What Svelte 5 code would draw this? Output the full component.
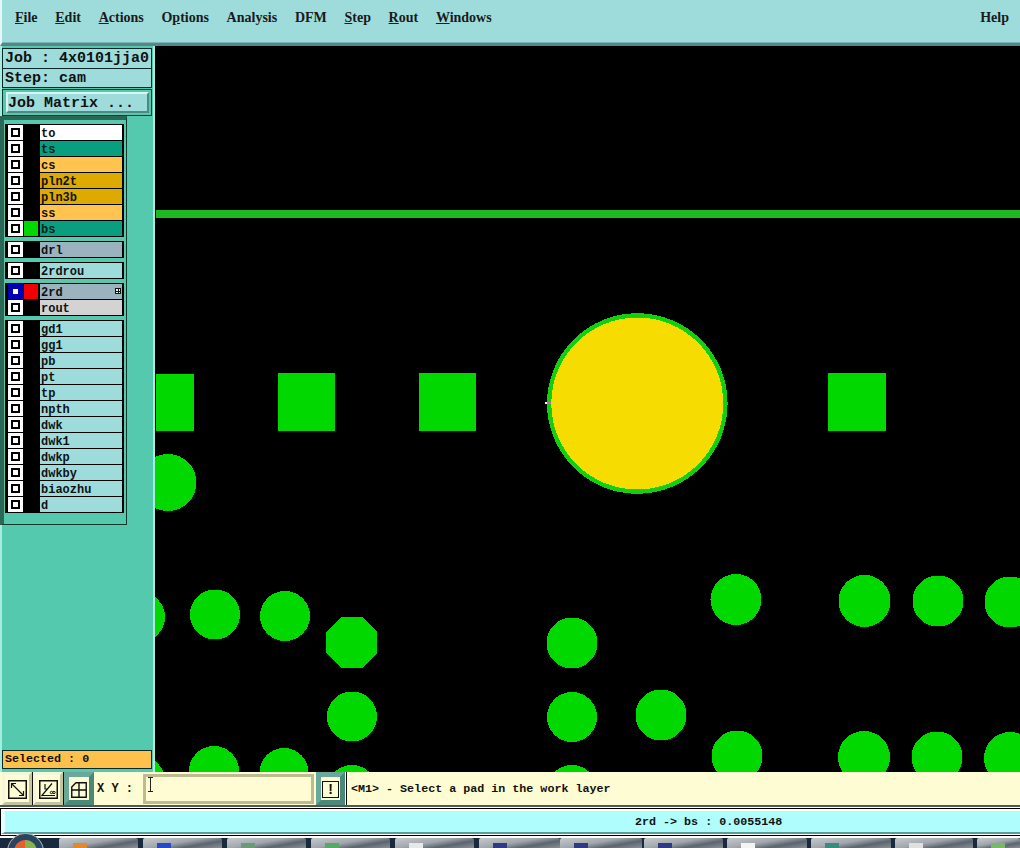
<script>
  const menus = [
    { pre: "", u: "F", post: "ile" },
    { pre: "", u: "E", post: "dit" },
    { pre: "", u: "A", post: "ctions" },
    { pre: "O", u: "p", post: "tions" },
    { pre: "Analysis", u: "", post: "" },
    { pre: "DFM", u: "", post: "" },
    { pre: "", u: "S", post: "tep" },
    { pre: "", u: "R", post: "out" },
    { pre: "", u: "W", post: "indows" }
  ];

  const groups = [
    [
      { name: "to", bg: "#ffffff" },
      { name: "ts", bg: "#0a9e80", fg: "#021f19" },
      { name: "cs", bg: "#ffc450" },
      { name: "pln2t", bg: "#dcaa00" },
      { name: "pln3b", bg: "#dcaa00" },
      { name: "ss", bg: "#ffc450" },
      { name: "bs", bg: "#0a9e80", fg: "#021f19", swatch: "#00d800" }
    ],
    [{ name: "drl", bg: "#9ab3bf" }],
    [{ name: "2rdrou", bg: "#9edcdc" }],
    [
      { name: "2rd", bg: "#9ab3bf", swatch: "#f00000", work: true },
      { name: "rout", bg: "#d3d3d3" }
    ],
    ["gd1", "gg1", "pb", "pt", "tp", "npth", "dwk", "dwk1", "dwkp", "dwkby", "biaozhu", "d"].map(
      (name) => ({ name, bg: "#9edcdc" })
    )
  ];

  const squares = [
    [156, 374, 38, 57],
    [278, 373, 57, 58],
    [419, 373, 57, 58],
    [828, 373, 58, 58]
  ];

  const pads = [
    [168, 482.5, 28.5],
    [140, 617, 25],
    [215, 614.5, 25],
    [285, 616, 25],
    [352, 716.5, 25],
    [140, 781, 25],
    [214, 771, 25],
    [284, 772.5, 24.5],
    [352, 790, 25],
    [572, 643, 25.5],
    [572, 717, 25],
    [661, 715, 25.5],
    [572, 790, 25],
    [736, 599.5, 25.5],
    [864.5, 601, 26],
    [938, 601, 25.5],
    [1010, 602, 25.5],
    [737, 756, 25.5],
    [864, 757, 26],
    [937, 757, 25.5],
    [1010, 758, 26]
  ];

  // ml is the gap to the previous taskbar button
  const tasks = [
    { w: 79, c: "#e08a30", ml: 59 },
    { w: 79, c: "#2848c8", ml: 5 },
    { w: 79, c: "#6a9a78", ml: 5 },
    { w: 79, c: "#58a868", ml: 5 },
    { w: 79, c: "#e8e8e8", ml: 5 },
    { w: 81, c: "#303a80", ml: 5 },
    { w: 82, c: "#303a80", ml: 0 },
    { w: 79, c: "#303a80", ml: 2 },
    { w: 80, c: "#f4f4f4", ml: 4 },
    { w: 80, c: "#3a8a80", ml: 4 },
    { w: 78, c: "#e0e0e0", ml: 4 },
    { w: 43, c: "#78b868", ml: 4 }
  ];
</script>

<div class="app">
  <header class="menubar">
    <nav class="menus">
      {#each menus as m}
        <span class="menu">{m.pre}<u>{m.u}</u>{m.post}</span>
      {/each}
    </nav>
    <span class="menu">Help</span>
  </header>

  <div class="main">
    <aside class="side">
      <div class="info">
        <div class="info-row">Job : 4x0101jja0</div>
        <div class="info-row step">Step: cam</div>
      </div>
      <div class="matrix">
        <div class="matrix-btn">Job Matrix ...</div>
      </div>

      <div class="layers">
        {#each groups as group}
          <div class="group">
            {#each group as layer}
              <div class="row">
                <span class="check" class:work={layer.work}><i></i></span>
                <span class="swatch" style:background={layer.swatch ?? "#000"}></span>
                <span class="label" style:background={layer.bg} style:color={layer.fg ?? "#111"}>
                  {layer.name}
                  {#if layer.work}<b class="mark"></b>{/if}
                </span>
              </div>
            {/each}
          </div>
        {/each}
      </div>

      <div class="spacer"></div>
      <div class="selected">Selected : 0</div>
    </aside>

    <svg class="board" viewBox="155 46 865 726" width="865" height="726" shape-rendering="crispEdges">
      <rect x="156" y="210" width="864" height="8" fill="#20b820" />
      {#each squares as s}
        <rect x={s[0]} y={s[1]} width={s[2]} height={s[3]} fill="#00d800" />
      {/each}
      {#each pads as p}
        <circle cx={p[0]} cy={p[1]} r={p[2]} fill="#00d800" />
      {/each}
      <polygon points="341,617 362,617 377,632 377,653 362,668 341,668 326,653 326,632" fill="#00d800" />
      <circle cx="637.3" cy="403.5" r="90.3" fill="#10d010" />
      <circle cx="637.3" cy="403.5" r="86" fill="#f6dc00" />
      <rect x="545" y="402" width="2" height="2" fill="#ffffff" />
      <rect x="547" y="402" width="4" height="2" fill="#d060a0" />
    </svg>
  </div>

  <div class="tools">
    <div class="tool">
      <span class="icon">
        <svg viewBox="0 0 19 19" width="19" height="19">
          <rect x="0.75" y="0.75" width="17.5" height="17.5" fill="none" stroke="#111" stroke-width="1.5" />
          <path d="M3.5 3.5 15.5 15.5M3.5 8V3.5H8M11 15.5H15.5V11" fill="none" stroke="#111" stroke-width="1.2" />
        </svg>
      </span>
    </div>
    <div class="tool">
      <span class="icon">
        <svg viewBox="0 0 19 19" width="19" height="19">
          <rect x="0.75" y="0.75" width="17.5" height="17.5" fill="none" stroke="#111" stroke-width="1.5" />
          <path d="M2.5 16 13 3.5M2.5 15.5H16M6 4V9H9" fill="none" stroke="#111" stroke-width="1.2" />
          <circle cx="12.5" cy="12.5" r="1.2" fill="none" stroke="#111" />
          <circle cx="15" cy="12.5" r="1.2" fill="none" stroke="#111" />
        </svg>
      </span>
    </div>
    <div class="tool active">
      <span class="icon">
        <svg viewBox="0 0 16 16" width="16" height="16">
          <path d="M5 .75H15.25V15.25H.75V5Z M8 1V15 M1 8H15" fill="none" stroke="#111" stroke-width="1.4" />
        </svg>
      </span>
    </div>
    <div class="xy">X Y :</div>
    <div class="input">
      <span class="caret"></span>
    </div>
    <div class="tool active bang">
      <span class="bang-box">!</span>
    </div>
    <div class="prompt">&lt;M1&gt; - Select a pad in the work layer</div>
  </div>

  <div class="status">
    <div class="status-frame">
      <div class="status-in">2rd -&gt; bs : 0.0055148</div>
    </div>
  </div>

  <footer class="taskbar">
    <div class="orb"></div>
    {#each tasks as t}
      <div class="task" style:width="{t.w}px" style:margin-left="{t.ml}px">
        <span class="task-ico" style:background={t.c}></span>
      </div>
    {/each}
  </footer>
</div>

<style>
  :global(body) {
    margin: 0;
    background: #000;
  }
  .app {
    width: 1020px;
    height: 848px;
    display: flex;
    flex-direction: column;
    overflow: hidden;
    position: relative;
    font-family: "Liberation Mono", monospace;
    font-weight: bold;
    color: #111;
  }

  .menubar {
    height: 46px;
    box-sizing: border-box;
    flex: none;
    display: flex;
    justify-content: space-between;
    padding: 9px 11px 0 13px;
    background: #9edcdc;
    border-left: 2px solid #e4f6f6;
    border-bottom: 3px solid #54868a;
    box-shadow: inset 0 -1px 0 #7fb4b6;
    font-family: "Liberation Serif", serif;
    font-size: 14px;
    line-height: 18px;
    color: #1a1a1a;
  }
  .menus {
    display: flex;
    gap: 17.7px;
  }

  .main {
    flex: none;
    height: 726px;
    display: flex;
  }

  .side {
    width: 155px;
    flex: none;
    box-sizing: border-box;
    display: flex;
    flex-direction: column;
    background: #55c9ad;
    border-right: 2px solid #a6ece0;
    box-shadow: inset 2px 0 0 #a6ece0;
    padding-top: 2px;
    font-size: 12px;
  }

  .info {
    margin-left: 2px;
    width: 150px;
    box-sizing: border-box;
    border: 1px solid #0a2a2a;
    background: #9edcdc;
    font-size: 15px;
    line-height: 19px;
  }
  .info-row {
    padding-left: 2px;
    white-space: nowrap;
  }
  .step {
    border-top: 1px solid #0a2a2a;
    height: 18px;
    line-height: 20px;
  }

  .matrix {
    margin: 1px 0 0 2px;
    width: 150px;
    height: 27px;
    box-sizing: border-box;
    border: 1px solid #0a3a30;
    background: #55c9ad;
    padding: 2px 2px 2px 3px;
  }
  .matrix-btn {
    height: 21px;
    box-sizing: border-box;
    background: #9edcdc;
    border: 2px solid;
    border-color: #dcf4f4 #4a8c84 #4a8c84 #dcf4f4;
    font-size: 15px;
    line-height: 19px;
    white-space: pre;
  }

  .layers {
    width: 127px;
    height: 409px;
    box-sizing: border-box;
    flex: none;
    background: #55c9ad;
    border-top: 4px solid #2c6655;
    border-left: 4px solid #2c6655;
    border-right: 1px solid #12382e;
    border-bottom: 1px solid #12382e;
    padding: 4px 2px 0 1px;
    display: flex;
    flex-direction: column;
    gap: 4px;
  }
  .group {
    display: flex;
    flex-direction: column;
    gap: 1px;
    background: #000;
    padding: 1px 2px 1px 3px;
  }
  .row {
    height: 15px;
    display: flex;
    gap: 1px;
  }
  .check {
    width: 15px;
    height: 15px;
    box-sizing: border-box;
    padding: 3px;
    background: #fff;
    display: block;
  }
  .check.work {
    background: #0000b0;
  }
  .check i {
    display: block;
    width: 9px;
    height: 9px;
    box-sizing: border-box;
    border: 2px solid #000;
    background: #fff;
  }
  .check.work i {
    border-color: #0000b0;
  }
  .swatch {
    width: 14px;
    height: 15px;
    margin-right: 1px;
  }
  .label {
    flex: 1;
    box-sizing: border-box;
    height: 15px;
    padding: 1px 0 0 1px;
    line-height: 16px;
    font-size: 12px;
    position: relative;
  }
  .mark {
    position: absolute;
    right: 1px;
    top: 4px;
    width: 6px;
    height: 6px;
    box-sizing: border-box;
    border: 1px solid #111;
    background: linear-gradient(#111, #111) center / 6px 1px no-repeat, linear-gradient(#111, #111) center / 1px 6px no-repeat, #dfe;
  }

  .spacer {
    flex: 1;
  }
  .selected {
    margin: 0 0 3px 2px;
    width: 150px;
    height: 19px;
    box-sizing: border-box;
    flex: none;
    background: #ffc04c;
    border: 1px solid #0a2a2a;
    padding-left: 2px;
    line-height: 16px;
    font-size: 11.7px;
  }

  .tools {
    flex: none;
    height: 33px;
    display: flex;
    background: #fefcd2;
    border-bottom: 2px solid #4c5c50;
    box-sizing: content-box;
  }
  .tool {
    width: 30px;
    box-sizing: border-box;
    flex: none;
    display: flex;
    align-items: center;
    justify-content: center;
    border: 3px solid;
    border-color: #f8f6da #c4c4a0 #c4c4a0 #f8f6da;
    box-shadow: 1px 0 0 #111;
    margin-right: 1px;
    padding-top: 2px;
  }
  .tool:first-child {
    margin-left: 2px;
  }
  .tool.active {
    border-width: 5px;
    border-color: #6aa89a #4c8878 #4c8878 #6aa89a;
    box-shadow: none;
  }
  .icon {
    display: flex;
  }
  .xy {
    width: 48px;
    flex: none;
    box-sizing: border-box;
    padding: 9px 0 0 2px;
    font-size: 12px;
    line-height: 16px;
  }
  .input {
    width: 171px;
    flex: none;
    box-sizing: border-box;
    margin: 2px 2px 1px 0;
    border: 3px solid #bcbc90;
    background: #fffcd4;
    padding: 0 2px;
  }
  .caret {
    display: block;
    width: 5px;
    height: 15px;
    background: linear-gradient(#222, #222) center / 1px 100% no-repeat, linear-gradient(#222, #222) top / 100% 1px no-repeat, linear-gradient(#222, #222) bottom / 100% 1px no-repeat;
  }
  .bang {
    margin-right: 2px;
    width: 29px;
  }
  .bang-box {
    width: 17px;
    height: 17px;
    box-sizing: border-box;
    border: 1.5px solid #111;
    background: #fefcd2;
    font-family: "Liberation Sans", sans-serif;
    font-size: 14px;
    line-height: 14px;
    text-align: center;
  }
  .prompt {
    flex: 1;
    box-shadow: -1px 0 0 #111;
    padding: 9px 0 0 4px;
    font-size: 11.7px;
    line-height: 16px;
    white-space: pre;
  }

  .status {
    flex: none;
    height: 31px;
    box-sizing: border-box;
    background: #fff;
    padding-top: 1px;
  }
  .status-frame {
    border-top: 1px solid #000;
    border-bottom: 1px solid #000;
    border-left: 1px solid #000;
    padding: 2px 0 1px 0;
    background: #fff;
  }
  .status-in {
    height: 23px;
    box-sizing: border-box;
    background: #b0fdfd;
    border-bottom: 2px solid #5c9c96;
    border-left: 4px solid #e8ffff;
    font-size: 11.7px;
    line-height: 23px;
    padding-left: 630px;
    white-space: pre;
  }

  .taskbar {
    flex: 1;
    display: flex;
    position: relative;
    background: #1a2a3c;
  }
  .orb {
    position: absolute;
    left: 7px;
    top: -5px;
    width: 37px;
    height: 37px;
    border-radius: 50%;
    box-sizing: border-box;
    border: 1px solid #8fb0c8;
    background: conic-gradient(#8ab050 0 25%, #e0c030 25% 50%, #3070d0 50% 75%, #e06030 75%);
    box-shadow: inset 0 0 0 6px #2a4460;
  }
  .task {
    flex: none;
    height: 10px;
    box-sizing: border-box;
    background: linear-gradient(170deg, #c6cace 0%, #a0a6ac 45%, #5c646e 70%, #8a9098 100%);
    border-radius: 2px 2px 0 0;
    padding: 5px 0 0 14px;
  }
  .task-ico {
    display: block;
    width: 14px;
    height: 5px;
  }
</style>
